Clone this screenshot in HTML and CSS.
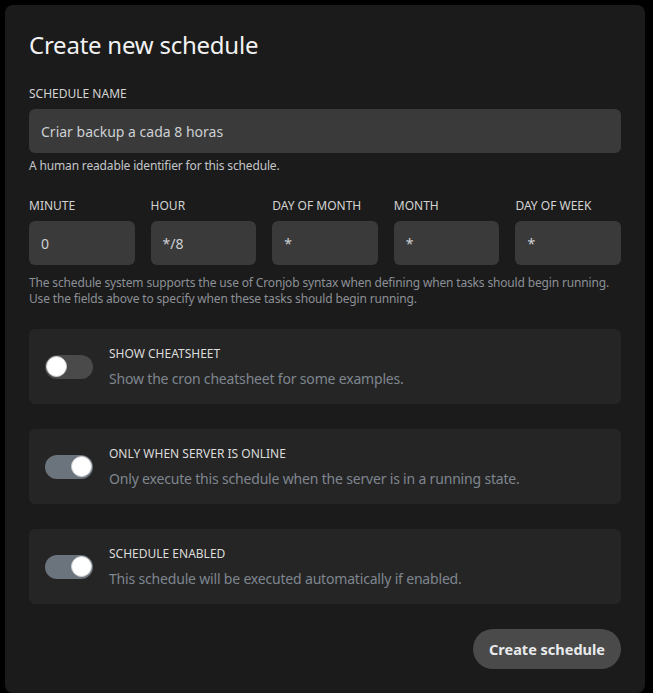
FILE: index.html
```html
<!DOCTYPE html>
<html lang="en">
<head>
<meta charset="utf-8">
<title>Create new schedule</title>
<link rel="stylesheet" href="styles.css">
</head>
<body>
<div class="modal">
  <h2 class="title">Create new schedule</h2>

  <label class="label">SCHEDULE NAME</label>
  <div class="input">Criar backup a cada 8 horas</div>
  <p class="help">A human readable identifier for this schedule.</p>

  <div class="cron">
    <div class="field">
      <label class="label">MINUTE</label>
      <div class="input">0</div>
    </div>
    <div class="field">
      <label class="label">HOUR</label>
      <div class="input">*/8</div>
    </div>
    <div class="field">
      <label class="label">DAY OF MONTH</label>
      <div class="input">*</div>
    </div>
    <div class="field">
      <label class="label">MONTH</label>
      <div class="input">*</div>
    </div>
    <div class="field">
      <label class="label">DAY OF WEEK</label>
      <div class="input">*</div>
    </div>
  </div>
  <p class="help help-muted">The schedule system supports the use of Cronjob syntax when defining when tasks should begin running. Use the fields above to specify when these tasks should begin running.</p>

  <div class="option">
    <span class="switch"><span class="knob"></span></span>
    <div class="option-text">
      <div class="option-title">SHOW CHEATSHEET</div>
      <div class="option-desc">Show the cron cheatsheet for some examples.</div>
    </div>
  </div>

  <div class="option">
    <span class="switch on"><span class="knob"></span></span>
    <div class="option-text">
      <div class="option-title">ONLY WHEN SERVER IS ONLINE</div>
      <div class="option-desc">Only execute this schedule when the server is in a running state.</div>
    </div>
  </div>

  <div class="option">
    <span class="switch on"><span class="knob"></span></span>
    <div class="option-text">
      <div class="option-title">SCHEDULE ENABLED</div>
      <div class="option-desc">This schedule will be executed automatically if enabled.</div>
    </div>
  </div>

  <div class="actions">
    <button class="btn">Create schedule</button>
  </div>
</div>
</body>
</html>
```

FILE: styles.css
```css
* { box-sizing: border-box; }

html, body {
  margin: 0;
  padding: 0;
  background: #000;
}

body {
  padding: 5px 8px 0 5px;
  font-family: "Noto Sans", "DejaVu Sans", sans-serif;
  color: #e5e7eb;
}

.modal {
  background: #1b1b1b;
  border-radius: 8px;
  padding: 24px 24px 23px 24px;
  min-height: 688px;
}

.title {
  margin: 0 0 25px 0;
  font-size: 24px;
  line-height: 32px;
  font-weight: 400;
  color: #f2f2f2;
  letter-spacing: -0.01em;
}

.label {
  display: block;
  font-size: 12px;
  line-height: 16px;
  color: #d4d4d4;
  margin-bottom: 7px;
  font-weight: 400;
}

.input {
  height: 44px;
  background: #3a3a3a;
  border-radius: 6px;
  padding: 0 12px;
  display: flex;
  align-items: center;
  font-size: 14px;
  color: #cdd0d4;
}

.help {
  margin: 5px 0 24px 0;
  font-size: 12px;
  line-height: 16px;
  color: #c4c6c9;
  letter-spacing: -0.013em;
}

.help-muted {
  margin-top: 10px;
  margin-bottom: 22px;
  color: #8c9096;
}

.cron {
  display: grid;
  grid-template-columns: repeat(5, 1fr);
  gap: 16px;
}

.option {
  background: #252525;
  border-radius: 6px;
  padding: 16px;
  display: flex;
  align-items: center;
  gap: 16px;
  margin-bottom: 25px;
  height: 75px;
}

.switch {
  flex: none;
  width: 48px;
  height: 24px;
  border-radius: 12px;
  background: #4a4a4a;
  position: relative;
}

.switch.on {
  background: #6b737d;
}

.knob {
  position: absolute;
  top: 1.5px;
  left: 1px;
  width: 21px;
  height: 21px;
  border-radius: 50%;
  background: #fff;
  border: 1px solid #d0d0d0;
}

.switch.on .knob {
  left: auto;
  right: 1px;
}

.option-text {
  display: flex;
  flex-direction: column;
  gap: 7px;
  padding-top: 2px;
}

.option-title {
  font-size: 12px;
  line-height: 16px;
  color: #dcdcdc;
}

.option-desc {
  font-size: 14px;
  line-height: 20px;
  color: #7f868f;
  letter-spacing: -0.013em;
}

.actions {
  display: flex;
  justify-content: flex-end;
}

.btn {
  height: 40px;
  padding: 0 16px;
  border: none;
  border-radius: 20px;
  background: #4a4a4a;
  color: #e8eaed;
  font-family: "Noto Sans", "DejaVu Sans", sans-serif;
  font-weight: 700;
  font-size: 14.5px;
}
```
